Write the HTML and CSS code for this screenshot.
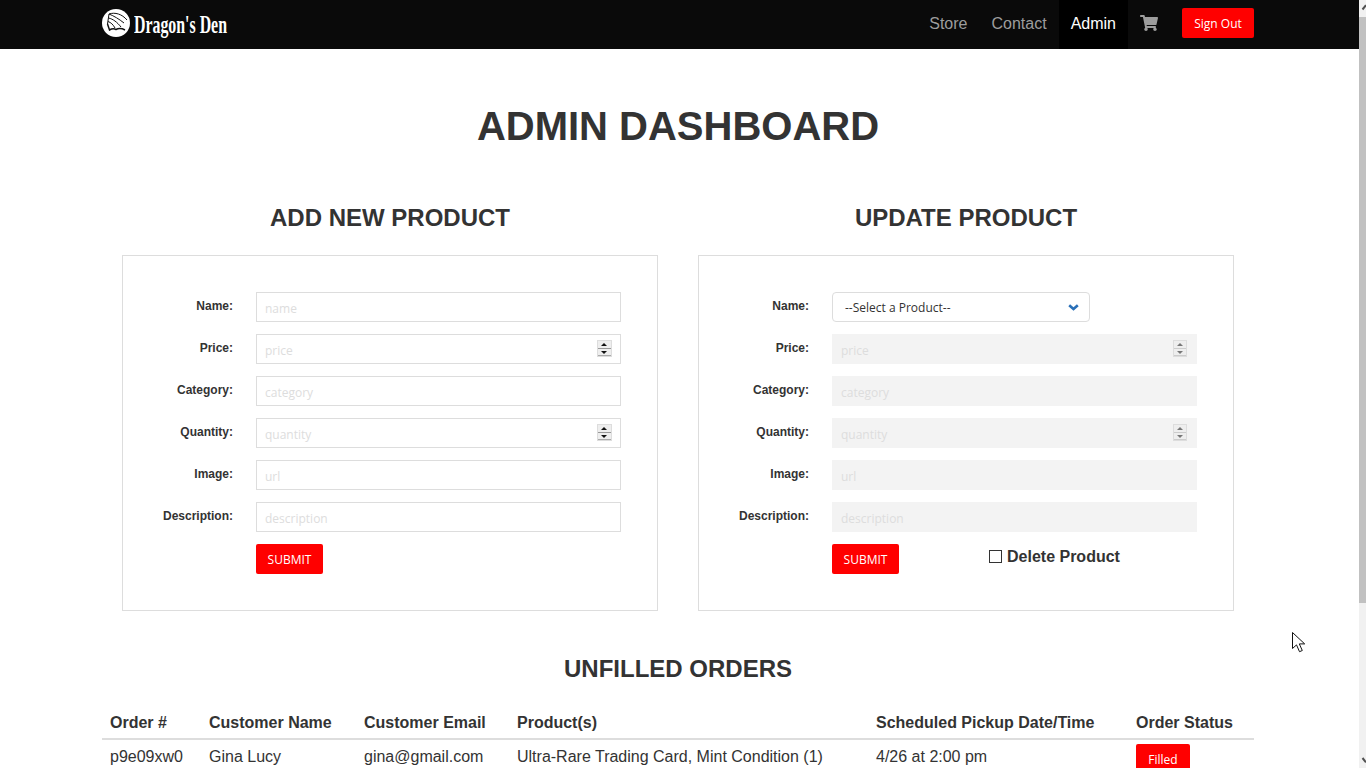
FILE: index.html
```html
<!DOCTYPE html>
<html lang="en">
<head>
    <meta charset="UTF-8">
    <title>Dragon's Den</title>
    <link rel="stylesheet" href="styles.css">
</head>
<body>
    <nav class="navbar">
        <div class="nav-inner">
            <a class="brand" href="#">
                <svg class="brand-mark" width="28" height="28" viewBox="0 0 28 28">
                    <circle cx="14" cy="14" r="14" fill="#fff"/>
                    <path d="M7 5C13 3 20 5 25 11M7 5L5.5 15M7 5C12 7 17 10 22 14M6.5 9C11 10 15 13 19 18M6 12.5C9 13.5 11 15.5 13 19" fill="none" stroke="#111" stroke-width="1"/>
                    <path d="M5.5 15L7.5 21C10 19.5 12 19.5 14 20.5C17 19 20 19.5 23 21" fill="none" stroke="#111" stroke-width="1.5"/>
                </svg>
                <span class="brand-text">Dragon's Den</span>
            </a>
            <ul class="nav-links">
                <li><a href="#">Store</a></li>
                <li><a href="#">Contact</a></li>
                <li><a class="active" href="#">Admin</a></li>
                <li>
                    <a href="#" class="cart">
                        <svg width="18" height="16" viewBox="0 0 576 512"><path fill="#9d9d9d" d="M528.12 301.319l47.273-208C578.806 78.301 567.391 64 551.99 64H159.208l-9.166-44.81C147.758 8.021 137.93 0 126.529 0H24C10.745 0 0 10.745 0 24v16c0 13.255 10.745 24 24 24h69.883l70.248 343.435C147.325 417.1 136 435.222 136 456c0 30.928 25.072 56 56 56s56-25.072 56-56c0-15.674-6.447-29.835-16.824-40h209.647C430.447 426.165 424 440.326 424 456c0 30.928 25.072 56 56 56s56-25.072 56-56c0-22.172-12.888-41.332-31.579-50.405l5.517-24.276c3.413-15.018-8.002-29.319-23.403-29.319H218.117l-6.545-32h293.145c11.206 0 20.92-7.754 23.403-18.681z"/></svg>
                    </a>
                </li>
            </ul>
            <button class="btn-red sign-out">Sign Out</button>
        </div>
    </nav>

    <main class="container">
        <h1>ADMIN DASHBOARD</h1>

        <div class="forms">
            <section>
                <h2>ADD NEW PRODUCT</h2>
                <form class="panel">
                    <label>Name:</label>
                    <input type="text" placeholder="name">
                    <label>Price:</label>
                    <div class="num-field">
                        <input type="text" placeholder="price">
                        <span class="spinner"><i class="up"></i><i class="down"></i></span>
                    </div>
                    <label>Category:</label>
                    <input type="text" placeholder="category">
                    <label>Quantity:</label>
                    <div class="num-field">
                        <input type="text" placeholder="quantity">
                        <span class="spinner"><i class="up"></i><i class="down"></i></span>
                    </div>
                    <label>Image:</label>
                    <input type="text" placeholder="url">
                    <label>Description:</label>
                    <input type="text" placeholder="description">
                    <div class="form-actions">
                        <button type="button" class="btn-red submit">SUBMIT</button>
                    </div>
                </form>
            </section>

            <section>
                <h2>UPDATE PRODUCT</h2>
                <form class="panel">
                    <label>Name:</label>
                    <div class="select-field">
                        <select>
                            <option>--Select a Product--</option>
                        </select>
                        <svg class="chevron" width="11" height="7" viewBox="0 0 11 7"><path d="M1.2 1.2l4.3 3.8 4.3-3.8" fill="none" stroke="#2a70b8" stroke-width="2.6"/></svg>
                    </div>
                    <label>Price:</label>
                    <div class="num-field">
                        <input type="text" placeholder="price" disabled>
                        <span class="spinner off"><i class="up"></i><i class="down"></i></span>
                    </div>
                    <label>Category:</label>
                    <input type="text" placeholder="category" disabled>
                    <label>Quantity:</label>
                    <div class="num-field">
                        <input type="text" placeholder="quantity" disabled>
                        <span class="spinner off"><i class="up"></i><i class="down"></i></span>
                    </div>
                    <label>Image:</label>
                    <input type="text" placeholder="url" disabled>
                    <label>Description:</label>
                    <input type="text" placeholder="description" disabled>
                    <div class="form-actions">
                        <button type="button" class="btn-red submit">SUBMIT</button>
                        <div class="delete-check"><span class="box"></span>Delete Product</div>
                    </div>
                </form>
            </section>
        </div>

        <h2 class="orders-title">UNFILLED ORDERS</h2>
        <table class="orders">
            <thead>
                <tr>
                    <th class="col-id">Order #</th>
                    <th class="col-name">Customer Name</th>
                    <th class="col-email">Customer Email</th>
                    <th class="col-prod">Product(s)</th>
                    <th class="col-date">Scheduled Pickup Date/Time</th>
                    <th>Order Status</th>
                </tr>
            </thead>
            <tbody>
                <tr>
                    <td>p9e09xw0</td>
                    <td>Gina Lucy</td>
                    <td>gina@gmail.com</td>
                    <td>Ultra-Rare Trading Card, Mint Condition (1)</td>
                    <td>4/26 at 2:00 pm</td>
                    <td><button class="btn-red filled">Filled</button></td>
                </tr>
            </tbody>
        </table>
    </main>

    <div class="scrollbar">
        <svg class="scroll-btn" width="7" height="17" viewBox="0 0 7 17"><path d="M3.5 9.5L7 5.2" fill="none" stroke="#505050" stroke-width="2"/></svg>
        <div class="scroll-thumb"></div>
        <div class="scroll-track"></div>
        <svg class="scroll-btn" width="7" height="17" viewBox="0 0 7 17"><path d="M3.5 7L7 11.3" fill="none" stroke="#505050" stroke-width="2"/></svg>
    </div>

    <svg class="mouse" width="14" height="21" viewBox="0 0 14 21"><path d="M.5.5v16l4-3.6 3 6.8 2.8-1.2-3-6.6h5.4z" fill="#fff" stroke="#111"/></svg>
</body>
</html>
```

FILE: styles.css
```css
body {
    margin: 0;
    padding-right: 10px;
    font-family: "Liberation Sans", Arial, sans-serif;
    color: #333;
    background-color: #fff;
}

/* navbar */
.navbar {
    height: 49px;
    margin-right: -10px;
    padding-right: 10px;
    background-color: #0a0a0a;
}

.nav-inner {
    width: 1152px;
    height: 49px;
    margin: 0 auto;
    display: flex;
    align-items: center;
}

.brand {
    display: flex;
    align-items: center;
    margin-right: auto;
    color: #fff;
    text-decoration: none;
}

.brand-mark {
    margin-top: -3px;
}

.brand-text {
    margin-left: 4px;
    width: 93px;
    font-family: "Liberation Serif", serif;
    font-weight: bold;
    font-size: 26px;
    white-space: nowrap;
    transform: scaleX(0.61);
    transform-origin: left center;
}

.nav-links {
    display: flex;
    list-style: none;
    margin: 0;
    padding: 0;
}

.nav-links a {
    display: block;
    height: 49px;
    padding: 0 12px;
    line-height: 47px;
    font-size: 16px;
    color: #9d9d9d;
    text-decoration: none;
}

.nav-links a.active {
    background-color: #000;
    color: #fff;
}

.nav-links a.cart svg {
    display: block;
    padding-top: 15px;
}

.btn-red {
    border: none;
    border-radius: 2px;
    background-color: #f00;
    color: #fff;
    font-family: "Open Sans", sans-serif;
    font-size: 12px;
    cursor: pointer;
}

.sign-out {
    width: 72px;
    height: 30px;
    margin-left: 12px;
    margin-top: -3px;
}

/* main */
.container {
    width: 1152px;
    margin: 0 auto;
}

h1 {
    margin: 0;
    padding-top: 52px;
    font-size: 40px;
    line-height: 50px;
    text-align: center;
}

h2 {
    margin: 0;
    font-size: 24px;
    line-height: 28px;
    text-align: center;
}

.forms {
    display: grid;
    grid-template-columns: 536px 536px;
    column-gap: 40px;
    justify-content: center;
    margin-top: 53px;
}

.panel {
    display: grid;
    grid-template-columns: 110px 365px;
    column-gap: 23px;
    row-gap: 12px;
    grid-auto-rows: 30px;
    margin-top: 23px;
    padding: 36px 0;
    border: 1px solid #ddd;
}

.panel label {
    text-align: right;
    font-size: 12px;
    font-weight: bold;
    line-height: 28px;
}

.panel input,
.panel select {
    box-sizing: border-box;
    width: 100%;
    height: 30px;
    padding: 2px 8px 0;
    border: 1px solid #ddd;
    border-radius: 0;
    font-family: "Open Sans", sans-serif;
    font-size: 12px;
    color: #333;
    background-color: #fff;
    outline: none;
}

.panel input::placeholder {
    color: #ddd;
}

.panel input:disabled {
    background-color: #f3f3f3;
    border-color: #f3f3f3;
}

.num-field,
.select-field {
    position: relative;
}

.spinner {
    position: absolute;
    top: 6px;
    right: 9px;
    width: 15px;
    height: 17px;
    box-sizing: border-box;
    display: flex;
    flex-direction: column;
    border: 1px solid #ddd;
    background-color: #eee;
}

.spinner i {
    flex: 1;
    position: relative;
    border-bottom: 1px solid #999;
}

.spinner i::after {
    content: "";
    position: absolute;
    left: 3px;
    top: 2px;
    border-left: 3px solid transparent;
    border-right: 3px solid transparent;
}

.spinner .up::after {
    border-bottom: 3px solid #111;
}

.spinner .down {
    border-bottom: 1px solid #aaa;
}

.spinner .down::after {
    border-top: 3px solid #111;
}

.spinner.off {
    right: 10px;
    width: 14px;
}

.spinner.off i {
    border-bottom-color: #ccc;
}

.spinner.off .up::after {
    border-bottom-color: #777;
}

.spinner.off .down::after {
    border-top-color: #777;
}

.select-field {
    width: 258px;
}

.panel select {
    appearance: none;
    padding: 0 8px 0 12px;
    border-radius: 4px;
}

.chevron {
    position: absolute;
    top: 12px;
    right: 11px;
}

.form-actions {
    grid-column: 2;
    display: flex;
}

.submit {
    width: 67px;
    height: 30px;
}

.delete-check {
    display: flex;
    align-items: center;
    height: 25px;
    margin-left: 90px;
    font-size: 16px;
    font-weight: bold;
}

.delete-check .box {
    box-sizing: border-box;
    width: 13px;
    height: 13px;
    margin-right: 5px;
    border: 1px solid #333;
}

/* orders */
.orders-title {
    margin-top: 44px;
}

.orders {
    width: 100%;
    margin-top: 22px;
    border-collapse: collapse;
    table-layout: fixed;
    font-size: 16px;
}

.orders th {
    padding: 8px 8px 6px;
    text-align: left;
    border-bottom: 2px solid #ddd;
    line-height: 19px;
}

.orders td {
    padding: 7px 8px;
    line-height: 19px;
    vertical-align: top;
}

.col-id { width: 83px; }
.col-name { width: 139px; }
.col-email { width: 137px; }
.col-prod { width: 343px; }
.col-date { width: 244px; }

.filled {
    display: block;
    width: 54px;
    height: 30px;
    margin-top: -3px;
    padding-top: 2px;
}

/* window chrome in the shot */
.scrollbar {
    position: fixed;
    top: 0;
    left: 1359px;
    width: 7px;
    height: 768px;
    display: flex;
    flex-direction: column;
    background-color: #f1f1f1;
}

.scroll-btn {
    display: block;
    flex: none;
}

.scroll-thumb {
    height: 586px;
    background-color: #c1c1c1;
}

.scroll-track {
    flex: 1;
}

.mouse {
    position: fixed;
    left: 1292px;
    top: 632px;
}
```
